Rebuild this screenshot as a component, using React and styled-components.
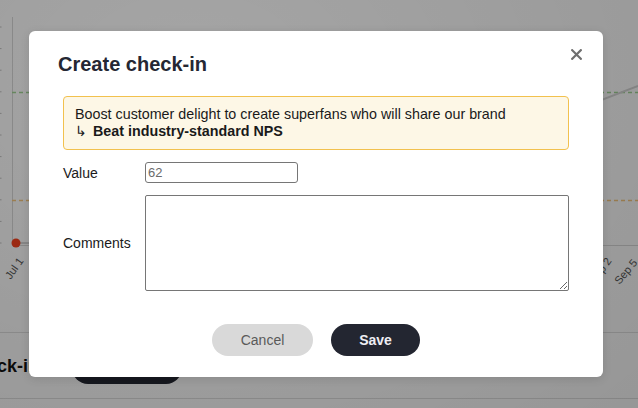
import React from "react";
import styled, { createGlobalStyle } from "styled-components";

const Global = createGlobalStyle`
  html, body { margin: 0; padding: 0; }
  body {
    width: 638px; height: 408px; overflow: hidden;
    background: #ffffff;
    font-family: "Liberation Sans", Arial, Helvetica, sans-serif;
  }
`;

const Page = styled.div`
  position: relative;
  width: 638px;
  height: 408px;
  overflow: hidden;
  background: #fbfbfb;
`;

const ChartSection = styled.div`
  height: 333px;
  border-bottom: 1px solid #dcdcdc;
  box-sizing: border-box;
`;

const CheckinsRow = styled.div`
  height: 66px;
  display: flex;
  align-items: center;
  gap: 23px;
  margin-left: -37px;
  padding-top: 2px;
  box-sizing: border-box;
  border-bottom: 1px solid #dcdcdc;
`;

const Heading = styled.h2`
  margin: 0;
  font-size: 18px;
  font-weight: 700;
  color: #111;
`;

const DarkButton = styled.div`
  width: 110px;
  height: 32px;
  margin-top: 3px;
  border-radius: 16px;
  background: #232631;
`;

const Overlay = styled.div`
  position: absolute;
  inset: 0;
  background: radial-gradient(ellipse at 30% 20%, rgba(0,0,0,0.34), rgba(0,0,0,0.40));
  display: flex;
  align-items: flex-start;
  justify-content: flex-start;
  padding: 31px 0 0 29px;
  box-sizing: border-box;
`;

const Modal = styled.div`
  width: 574px;
  height: 346px;
  background: #fff;
  border-radius: 6px;
  box-shadow: 0 2px 10px rgba(0,0,0,0.12);
  box-sizing: border-box;
  padding: 20px 34px 21px;
  display: flex;
  flex-direction: column;
`;

const Header = styled.div`
  display: flex;
  align-items: flex-start;
  justify-content: space-between;
  margin: 0 -13px 0 -5px;
`;

const Title = styled.h1`
  margin: 0;
  font-size: 20px;
  line-height: 26px;
  font-weight: 700;
  color: #252733;
`;

const Close = styled.button`
  border: 0;
  background: none;
  padding: 0;
  margin-top: -3px;
  width: 12px;
  height: 12px;
  display: flex;
  align-items: center;
  justify-content: center;
  cursor: pointer;
`;

const Callout = styled.div`
  margin-top: 19px;
  border: 1px solid #f2c14e;
  background: #fdf7e6;
  border-radius: 4px;
  padding: 9px 11px;
  font-size: 14.3px;
  line-height: 17px;
  color: #1a1a1a;
`;

const Strong = styled.div`
  font-weight: 700;
`;

const Arrow = styled.span`
  font-weight: 400;
  margin-right: 6px;
`;

const Form = styled.div`
  display: grid;
  grid-template-columns: 82px 1fr;
  row-gap: 12px;
  align-items: center;
  margin-top: 12px;
`;

const Label = styled.label`
  font-size: 14px;
  color: #1a1a1a;
`;

const Input = styled.input`
  width: 153px;
  height: 21px;
  box-sizing: border-box;
  border: 1px solid #767676;
  border-radius: 3px;
  padding: 0 2px;
  font-family: "Liberation Sans", Arial, sans-serif;
  font-size: 13px;
  color: #6b6b6b;
  outline: none;
`;

const TextArea = styled.textarea`
  width: 424px;
  height: 96px;
  box-sizing: border-box;
  border: 1px solid #767676;
  border-radius: 2px;
  resize: both;
  display: block;
  font-family: "Liberation Sans", Arial, sans-serif;
  outline: none;
`;

const Actions = styled.div`
  margin-top: auto;
  display: flex;
  justify-content: center;
  gap: 18px;
`;

const Btn = styled.button`
  height: 32px;
  width: ${(p) => p.$w}px;
  border: 0;
  border-radius: 16px;
  font-family: "Liberation Sans", Arial, sans-serif;
  font-size: 14px;
  font-weight: ${(p) => (p.$primary ? 700 : 400)};
  background: ${(p) => (p.$primary ? "#232631" : "#d9d9d9")};
  color: ${(p) => (p.$primary ? "#eeeef4" : "#5a5a5a")};
  cursor: pointer;
`;

function Chart() {
  const ticks = [];
  for (let i = 0; i < 11; i++) ticks.push(27 + i * 21.6);
  return (
    <svg width="638" height="332" viewBox="0 0 638 332">
      {ticks.map((y) => (
        <line key={y} x1="-2" x2="1.5" y1={y} y2={y} stroke="#bdbdbd" strokeWidth="1" />
      ))}
      <line x1="12.5" y1="17" x2="12.5" y2="245" stroke="#d6d6d6" strokeWidth="1" />
      <line x1="12" y1="245.5" x2="638" y2="245.5" stroke="#d6d6d6" strokeWidth="1" />
      <line x1="12" y1="92.5" x2="638" y2="92.5" stroke="#9fd193" strokeWidth="1.3" strokeDasharray="4 3" />
      <line x1="12" y1="200.5" x2="638" y2="200.5" stroke="#f4c57e" strokeWidth="1.3" strokeDasharray="4 3" />
      <polyline points="16,243 420,243 570,112 638,86" fill="none" stroke="#d3d3d3" strokeWidth="2" />
      <circle cx="16" cy="243" r="4.5" fill="#f5401c" />
      <g fontFamily="Liberation Sans, Arial, sans-serif" fontSize="11" fill="#555">
        <text transform="translate(24 261) rotate(-55)" textAnchor="end">Jul 1</text>
        <text transform="translate(612 261) rotate(-55)" textAnchor="end">Sep 2</text>
        <text transform="translate(638 263) rotate(-50)" textAnchor="end">Sep 5</text>
      </g>
    </svg>
  );
}

export default function App() {
  return (
    <>
      <Global />
      <Page>
        <ChartSection>
          <Chart />
        </ChartSection>
        <CheckinsRow>
          <Heading>Check-ins</Heading>
          <DarkButton />
        </CheckinsRow>
        <Overlay>
          <Modal>
            <Header>
              <Title>Create check-in</Title>
              <Close aria-label="Close">
                <svg width="11" height="11" viewBox="0 0 11 11">
                  <path d="M1.2 1.2 L9.8 9.8 M9.8 1.2 L1.2 9.8" stroke="#6f6f6f" strokeWidth="2.2" strokeLinecap="square" />
                </svg>
              </Close>
            </Header>
            <Callout>
              Boost customer delight to create superfans who will share our brand
              <Strong>
                <Arrow>↳</Arrow>Beat industry-standard NPS
              </Strong>
            </Callout>
            <Form>
              <Label>Value</Label>
              <Input defaultValue="62" />
              <Label>Comments</Label>
              <TextArea />
            </Form>
            <Actions>
              <Btn $w={101}>Cancel</Btn>
              <Btn $w={89} $primary>Save</Btn>
            </Actions>
          </Modal>
        </Overlay>
      </Page>
    </>
  );
}
